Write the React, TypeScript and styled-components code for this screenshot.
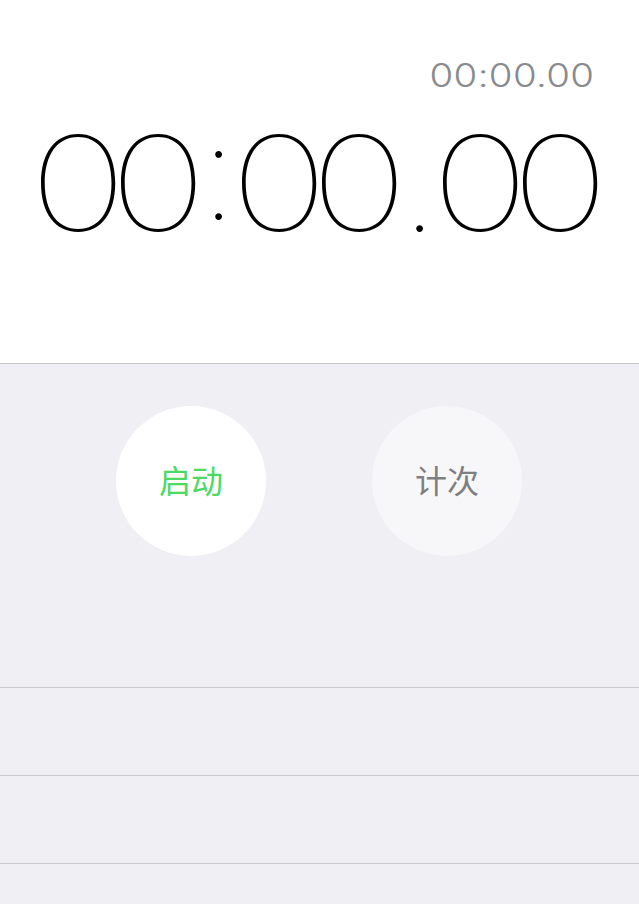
import React from "react";
import styled, { createGlobalStyle } from "styled-components";

const GlobalStyle = createGlobalStyle`
  html, body { margin: 0; padding: 0; background: #efeff4; }
  body { font-family: "Inter", "Noto Sans CJK SC", sans-serif; }
`;

const Screen = styled.div`
  width: 639px;
  height: 904px;
  overflow: hidden;
  background: #efeff4;
  display: flex;
  flex-direction: column;
`;

const Header = styled.header`
  height: 363px;
  flex: none;
  background: #ffffff;
  border-bottom: 1px solid #c8c7cc;
  display: flex;
  flex-direction: column;
`;

const LapTime = styled.div`
  align-self: flex-end;
  margin-top: 60px;
  margin-right: 45px;
  font-family: "Inter", sans-serif;
  font-weight: 300;
  font-size: 32px;
  line-height: 32px;
  color: #8a8a8e;
  letter-spacing: 0.3px;
  transform: scaleX(1.2);
  transform-origin: right center;
`;

const MainClock = styled.div`
  display: flex;
  margin-top: 25px;
  margin-left: 38px;
  font-family: "Inter", sans-serif;
  font-weight: 120;
  font-size: 132px;
  line-height: 132px;
  color: #000;
`;

const Cell = styled.span<{ $w: number }>`
  width: ${(p) => p.$w}px;
  flex: none;
  display: flex;
  justify-content: center;
`;

const DigitGlyph = styled.span`
  display: inline-block;
  letter-spacing: -0.12em;
  transform: translateX(-0.075em) scaleX(1.26);
`;

const SepGlyph = styled.span<{ $lift: number }>`
  display: inline-block;
  letter-spacing: -0.1em;
  transform: translate(-0.05em, ${(p) => -p.$lift}px);
`;

const Controls = styled.div`
  height: 323px;
  flex: none;
  display: flex;
  justify-content: center;
  align-items: flex-start;
  gap: 106px;
  padding: 42px 1px 0 0;
  box-sizing: border-box;
`;

const RoundButton = styled.button<{ $bg: string; $color: string }>`
  width: 150px;
  height: 150px;
  border-radius: 50%;
  border: none;
  padding: 0 0 4px;
  background: ${(p) => p.$bg};
  color: ${(p) => p.$color};
  font-family: "Noto Sans CJK SC", sans-serif;
  font-size: 32px;
  font-weight: 400;
  display: flex;
  align-items: center;
  justify-content: center;
`;

const LapList = styled.div`
  display: flex;
  flex-direction: column;
`;

const LapRow = styled.div`
  height: 87px;
  flex: none;
  border-top: 1px solid #c8c7cc;
`;

const clock = ["0", "0", ":", "0", "0", ".", "0", "0"];

export default function App() {
  return (
    <>
      <GlobalStyle />
      <Screen>
        <Header>
          <LapTime>00:00.00</LapTime>
          <MainClock>
            {clock.map((c, i) =>
              c === ":" || c === "." ? (
                <Cell key={i} $w={41}>
                  <SepGlyph $lift={c === ":" ? 12 : 0}>{c}</SepGlyph>
                </Cell>
              ) : (
                <Cell key={i} $w={80}>
                  <DigitGlyph>{c}</DigitGlyph>
                </Cell>
              )
            )}
          </MainClock>
        </Header>
        <Controls>
          <RoundButton $bg="#ffffff" $color="#4cd964">启动</RoundButton>
          <RoundButton $bg="#f7f7f9" $color="#7f7f7f">计次</RoundButton>
        </Controls>
        <LapList>
          <LapRow />
          <LapRow />
          <LapRow />
        </LapList>
      </Screen>
    </>
  );
}
